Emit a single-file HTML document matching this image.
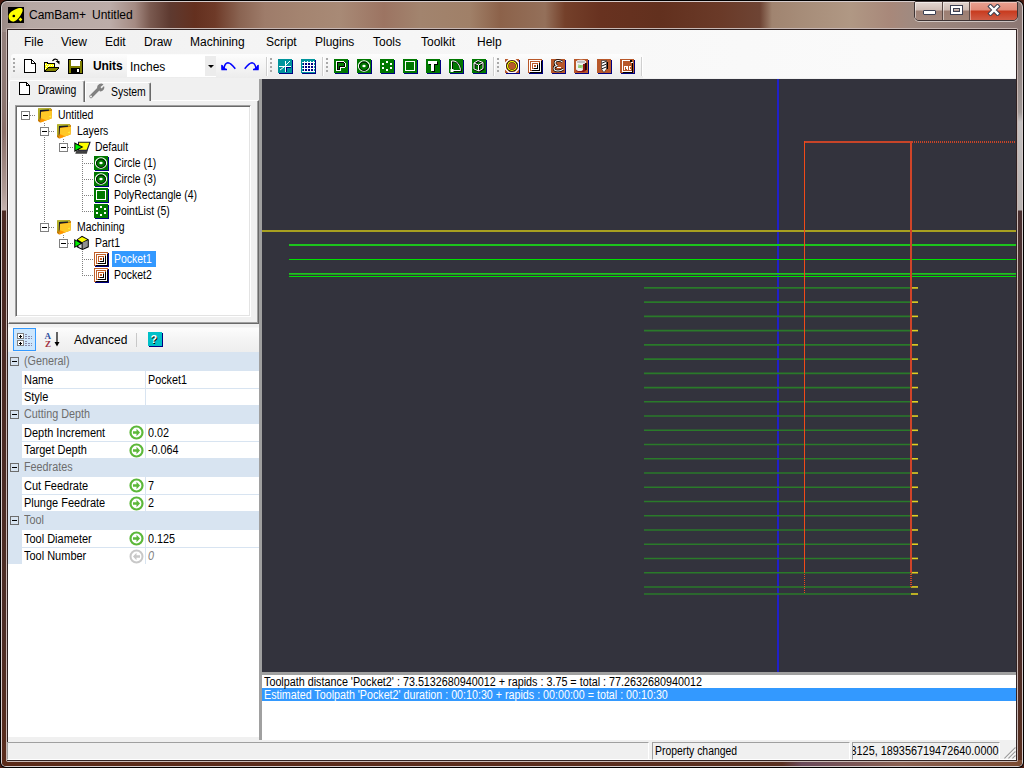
<!DOCTYPE html>
<html><head><meta charset="utf-8">
<style>
*{margin:0;padding:0;box-sizing:border-box}
html,body{width:1024px;height:768px;overflow:hidden;background:#4a1c12}
body{position:relative;font-family:"Liberation Sans",sans-serif;font-size:11px;color:#000}
.a{position:absolute}
.t{position:absolute;white-space:nowrap;line-height:14px;font-size:12px;transform-origin:0 0;transform:scaleX(0.87)}
.m{position:absolute;white-space:nowrap;line-height:14px;font-size:12px}
#frame{left:0;top:0;width:1024px;height:768px;background:#000;border-radius:7px 7px 6px 6px}
#client{left:8px;top:30px;width:1008px;height:730px;background:#f0f0f0}
.grip{position:absolute;top:58px;width:2px;height:14px;background:repeating-linear-gradient(#a8a8a8 0 2px,transparent 2px 4px)}
.ib{position:absolute;top:59px;width:14px;height:14px;box-shadow:1px 1px 0 #000080}
.ib svg{position:absolute;left:0;top:0}
.g{background:#007800}.b{background:#b8582a}
.dv{position:absolute;width:1px;background:repeating-linear-gradient(#808080 0 1px,transparent 1px 2px)}
.dh{position:absolute;height:1px;background:repeating-linear-gradient(90deg,#808080 0 1px,transparent 1px 2px)}
.bx{position:absolute;width:9px;height:9px;border:1px solid #808080;background:#fff}
.bx::after{content:"";position:absolute;left:1px;top:3px;width:5px;height:1px;background:#000}
.ti{position:absolute;width:14px;height:14px;box-shadow:1px 1px 0 #000080}
.ti svg{position:absolute;left:0;top:0}
.p{background:#c0602a}
.tr{position:absolute;white-space:nowrap;line-height:16px;font-size:12px;transform-origin:0 0;transform:scaleX(0.87)}
.mb{position:absolute;left:10px;width:9px;height:9px;border:1px solid #6d6d6d}
.mb::after{content:"";position:absolute;left:1px;top:3px;width:5px;height:1px;background:#000}
.pc{position:absolute;left:24px;white-space:nowrap;line-height:19px;font-size:12px;transform-origin:0 0;transform:scaleX(0.9);color:#6d6d6d}
.pn{position:absolute;left:24px;white-space:nowrap;line-height:17px;font-size:12px;transform-origin:0 0;transform:scaleX(0.915)}
.pv{position:absolute;left:148px;white-space:nowrap;line-height:17px;font-size:12px;transform-origin:0 0;transform:scaleX(0.9)}
.sp{position:absolute;top:742px;height:18px;border-top:1px solid #a0a0a0;border-left:1px solid #a0a0a0;border-right:1px solid #fff;border-bottom:1px solid #fff}
</style></head><body>
<div id="frame" class="a"></div>
<div class="a" style="left:1px;top:1px;width:1022px;height:766px;border-radius:6px 6px 5px 5px;background:#d6cccc"></div>
<div class="a" style="left:2px;top:2px;width:1020px;height:764px;border-radius:5px 5px 4px 4px;overflow:hidden">
 <div class="a" style="left:0;top:0;width:1020px;height:30px;background:linear-gradient(90deg,#988682 -2px,#b6a8a4 26px,#bcaca8 108px,#a48a82 133px,#7a5a50 148px,#5e3a30 168px,#64301f 193px,#6e3a28 213px,#8a6452 238px,#9e7c6a 263px,#a48470 298px,#a88a76 338px,#9c7462 382px,#a2846e 418px,#a08068 468px,#8c624a 498px,#94705a 543px,#74402a 563px,#683220 598px,#62301e 658px,#6a3a28 718px,#6e4434 758px,#a08470 770px,#a68c78 798px,#b09884 848px,#a8887a 888px,#a08a80 910px,#8c7874 1018px)"></div>
 <div class="a" style="left:0;top:30px;width:6px;height:734px;background:linear-gradient(#93807c 0,#8c7670 70px,#8a6e68 100px,#b09c96 160px,#c4b2ae 178px,#4e2c24 179px,#4a2a24 330px,#4e2e26 600px,#5a2c1c 734px)"></div>
 <div class="a" style="left:1014px;top:30px;width:6px;height:734px;background:linear-gradient(#8a7a78 0,#a09896 80px,#c4c0c0 90px,#b8b2b0 178px,#4a3030 179px,#4a3434 330px,#4a2c28 600px,#5a3020 734px)"></div>
 <div class="a" style="left:0;top:758px;width:1020px;height:6px;background:linear-gradient(90deg,#5a2a18,#5a2c1c 500px,#5a3020 780px,#6a4a5a 800px,#8a6050 900px,#7a4a30 1020px)"></div>
</div>
<div class="a" style="left:6px;top:28px;width:1012px;height:734px;background:#c8b8b4;border-radius:2px"></div>
<div class="a" style="left:7px;top:29px;width:1010px;height:732px;background:#302222"></div>
<div id="client" class="a"></div>

<!-- title -->
<svg class="a" style="left:8px;top:7px" width="16" height="16" viewBox="0 0 16 16"><rect width="16" height="16" fill="#000"/><path d="M0.6 10 C0.3 6.5 3.5 3.8 7.5 2.2 C11 0.8 14.5 0.5 14.7 2.8 C14.9 5 12.8 8.2 10.8 10.8 C8.8 13.3 6.8 14.9 4.5 14.6 C2.3 14.3 0.8 12.5 0.6 10Z" fill="#ffff00"/><circle cx="5.8" cy="9" r="1.35" fill="#000"/><path d="M12.5 10.6 l1.9 1.9 -1.9 1.9 -1.9 -1.9z" fill="#ffff00"/></svg>
<div class="m" style="left:29px;top:8px;color:#000">CamBam+</div><div class="m" style="left:92px;top:8px;color:#000">Untitled</div>
<!-- caption buttons -->
<div class="a" style="left:914px;top:1px;width:104px;height:20px;border:1px solid #3e3434;border-radius:2px 2px 5px 5px;overflow:hidden;box-shadow:0 1px 0 rgba(255,255,255,0.55)">
 <div class="a" style="left:0;top:0;width:28px;height:19px;background:linear-gradient(#e4d8d2 0,#d0beb6 8px,#a08276 9px,#a48a80 19px);border-right:1px solid #5a4a46;box-shadow:inset 1px 1px 0 rgba(255,255,255,.5)"></div>
 <div class="a" style="left:28px;top:0;width:27px;height:19px;background:linear-gradient(#e0d4ce 0,#cdbbb3 8px,#9c7e72 9px,#a08679 19px);border-right:1px solid #5a4a46;box-shadow:inset 1px 1px 0 rgba(255,255,255,.5)"></div>
 <div class="a" style="left:55px;top:0;width:47px;height:19px;background:linear-gradient(#e8a090 0,#e08a78 8px,#c83a1e 9px,#d0604a 19px);box-shadow:inset 1px 1px 0 rgba(255,255,255,.4)"></div>
</div>
<div class="a" style="left:923px;top:10px;width:13px;height:5px;background:#fff;border:1px solid #3c4052;border-radius:1px"></div>
<div class="a" style="left:951px;top:6px;width:11px;height:8px;border:2px solid #fff;outline:1px solid #3c4052;box-shadow:inset 0 0 0 1px #3c4052"></div>
<svg class="a" style="left:986px;top:4px" width="16" height="12" viewBox="0 0 16 12"><path d="M4.5 2.5 L11.5 9.5 M11.5 2.5 L4.5 9.5" stroke="#3c4052" stroke-width="4.4" stroke-linecap="square"/><path d="M4.5 2.5 L11.5 9.5 M11.5 2.5 L4.5 9.5" stroke="#fff" stroke-width="2.4" stroke-linecap="square"/></svg>

<!-- menu -->
<div class="a" style="left:8px;top:30px;width:1008px;height:48px;background:linear-gradient(90deg,#f0f0f0 0,#f5f5f5 300px,#f8f8f8 600px,#fbfbfb 1008px)"></div>
<div class="m" style="left:24px;top:35px">File</div>
<div class="m" style="left:61px;top:35px">View</div>
<div class="m" style="left:105px;top:35px">Edit</div>
<div class="m" style="left:144px;top:35px">Draw</div>
<div class="m" style="left:190px;top:35px">Machining</div>
<div class="m" style="left:266px;top:35px">Script</div>
<div class="m" style="left:315px;top:35px">Plugins</div>
<div class="m" style="left:373px;top:35px">Tools</div>
<div class="m" style="left:421px;top:35px">Toolkit</div>
<div class="m" style="left:477px;top:35px">Help</div>

<!-- toolbar -->
<div class="a" style="left:11px;top:54px;width:632px;height:24px;border-radius:3px 3px 0 0;background:linear-gradient(#fdfdfd,#f3f3f3 60%,#ececec)"></div>
<div class="a" style="left:266px;top:57px;width:1px;height:19px;background:#cfcfcf;box-shadow:1px 0 0 #fff"></div>
<div class="a" style="left:322px;top:57px;width:1px;height:19px;background:#cfcfcf;box-shadow:1px 0 0 #fff"></div>
<div class="a" style="left:493px;top:57px;width:1px;height:19px;background:#cfcfcf;box-shadow:1px 0 0 #fff"></div>
<div class="a" style="left:641px;top:57px;width:1px;height:19px;background:#cfcfcf;box-shadow:1px 0 0 #fff"></div>
<div class="grip" style="left:13px"></div><div class="grip" style="left:270px"></div><div class="grip" style="left:326px"></div><div class="grip" style="left:497px"></div>
<!-- new -->
<svg class="a" style="left:24px;top:59px" width="12" height="14" viewBox="0 0 12 14" shape-rendering="crispEdges"><path d="M0.5 0.5 H7.5 L11.5 4.5 V13.5 H0.5Z" fill="#fff" stroke="#000"/><path d="M7.5 0.5 V4.5 H11.5" fill="none" stroke="#000"/></svg>
<!-- open -->
<svg class="a" style="left:44px;top:58px" width="17" height="15" viewBox="0 0 17 15" shape-rendering="crispEdges"><path d="M0 4 H4 V5 H11 V9 H15 V10 L12 14 H0Z" fill="#000"/><path d="M1 5 H3 V6 H10 V9 H4 L1 13Z" fill="#ffff00"/><path d="M1 6 h1 v1 h-1z M2 8 h1 v1 h-1z M1 10 h1 v1 h-1z M3 6 h1 v1 h-1z M5 7 h1 v1 h-1z M7 7 h1 v1 h-1z M9 7 h1 v1 h-1z M4 8 h1 v1 h-1z" fill="#fff"/><path d="M4 10 H14 L11 13 H2Z" fill="#808000"/><path d="M8.5 3 Q11 -0.5 14 2.5" fill="none" stroke="#000" stroke-width="1.2" shape-rendering="auto"/><path d="M11.5 3 H15.5 V6.5Z" fill="#000" shape-rendering="auto"/></svg>
<!-- save -->
<svg class="a" style="left:68px;top:59px" width="15" height="15" viewBox="0 0 15 15" shape-rendering="crispEdges"><rect x="0" y="0" width="15" height="15" fill="#000"/><rect x="1" y="1" width="2" height="13" fill="#808000"/><rect x="12" y="2" width="2" height="12" fill="#808000"/><rect x="1" y="7" width="13" height="2" fill="#808000"/><rect x="3" y="1" width="9" height="6" fill="#fff"/><rect x="3" y="9" width="9" height="5" fill="#000"/><rect x="9" y="10" width="2" height="3" fill="#fff"/><rect x="12" y="1" width="1" height="1" fill="#fff"/></svg>
<div class="m" style="left:93px;top:59px;font-weight:bold;font-size:12px;letter-spacing:-0.1px;color:#000">Units</div>
<!-- combo -->
<div class="a" style="left:127px;top:55px;width:89px;height:22px;background:#fff"></div>
<div class="a" style="left:205px;top:56px;width:11px;height:20px;background:#ececec"></div>
<div class="a" style="left:208px;top:65px;width:0;height:0;border-left:3px solid transparent;border-right:3px solid transparent;border-top:3px solid #000"></div>
<div class="m" style="left:130px;top:60px;font-size:12px;color:#000">Inches</div>
<!-- undo redo -->
<svg class="a" style="left:221px;top:61px" width="16" height="10" viewBox="0 0 16 10"><path d="M3 7 Q4 2 7 1.8 Q9.5 1.8 14.3 7.8" fill="none" stroke="#0000ff" stroke-width="1.5"/><path d="M0.5 3.5 V8.5 H5.5Z" fill="#0000ff"/><path d="M1 4 V8.5 H6" fill="none" stroke="#0000ff" stroke-width="1.3"/></svg>
<svg class="a" style="left:244px;top:61px" width="16" height="10" viewBox="0 0 16 10"><g transform="translate(15,0) scale(-1,1)"><path d="M3 7 Q4 2 7 1.8 Q9.5 1.8 14.3 7.8" fill="none" stroke="#0000ff" stroke-width="1.5"/><path d="M0.5 3.5 V8.5 H5.5Z" fill="#0000ff"/><path d="M1 4 V8.5 H6" fill="none" stroke="#0000ff" stroke-width="1.3"/></g></svg>
<!-- snap / grid -->
<div class="ib" style="left:278px;background:#00949c"><svg width="14" height="14" viewBox="0 0 14 14" shape-rendering="crispEdges"><path d="M7 2 V13 M1 7 H13" stroke="#fff" stroke-width="1"/><path d="M8 8 H13 M8 8 V13" stroke="#000080"/><path d="M2 11 L6 8 M12 2 L8 6" stroke="#fff" stroke-width="1" shape-rendering="auto"/></svg></div>
<div class="ib" style="left:301px;background:#00949c"><svg width="14" height="14" viewBox="0 0 14 14" shape-rendering="crispEdges"><rect x="2" y="3" width="10" height="9" fill="#000080"/><path d="M3.5 2 V13 M6.5 2 V13 M9.5 2 V13 M12.5 2 V13 M1 3.5 H14 M1 6.5 H14 M1 9.5 H14 M1 12.5 H14" stroke="#fff"/></svg></div>
<!-- green -->
<div class="ib g" style="left:334px"><svg width="14" height="14" viewBox="0 0 14 14" shape-rendering="crispEdges"><path d="M2 2 H10 V3 H11 V4 H12 V8 H11 V9 H7 V12 H2Z" fill="#fff"/><path d="M3 3 H10 V4 H11 V8 H6 V11 H3Z" fill="#000"/><path d="M4 4 H9.5 V5 H10 V7 H5 V10 H4Z" fill="#007800"/></svg></div>
<div class="ib g" style="left:357px"><svg width="14" height="14" viewBox="0 0 14 14"><ellipse cx="7" cy="7" rx="5.6" ry="5.2" fill="none" stroke="#fff" stroke-width="1.1"/><ellipse cx="7" cy="7.3" rx="4.5" ry="4.2" fill="none" stroke="#000" stroke-width="0.9"/><ellipse cx="7" cy="7" rx="1.7" ry="1.2" fill="#fff"/></svg></div>
<div class="ib g" style="left:380px"><svg width="14" height="14" viewBox="0 0 14 14" shape-rendering="crispEdges"><g fill="#fff"><rect x="6" y="2" width="2" height="2"/><rect x="2" y="4" width="2" height="2"/><rect x="10" y="4" width="2" height="2"/><rect x="2" y="8" width="2" height="2"/><rect x="10" y="8" width="2" height="2"/><rect x="6" y="10" width="2" height="2"/></g></svg></div>
<div class="ib g" style="left:403px"><svg width="14" height="14" viewBox="0 0 14 14" shape-rendering="crispEdges"><rect x="2" y="2" width="10" height="10" fill="#000"/><rect x="2" y="2" width="9" height="9" fill="none" stroke="#fff" stroke-width="1"/><rect x="3" y="3" width="8" height="8" fill="#007800"/></svg></div>
<div class="ib g" style="left:426px"><svg width="14" height="14" viewBox="0 0 14 14" shape-rendering="crispEdges"><rect x="3" y="3" width="9" height="3" fill="#000"/><rect x="6" y="5" width="3" height="8" fill="#000"/><rect x="2" y="2" width="9" height="3" fill="#fff"/><rect x="5" y="4" width="3" height="8" fill="#fff"/></svg></div>
<div class="ib g" style="left:449px"><svg width="14" height="14" viewBox="0 0 14 14"><path d="M3 12 V2.5 H5.5 Q10.5 3.5 12 11 V12Z" fill="none" stroke="#000" stroke-width="1.6"/><path d="M2.5 11.5 V2 H5 Q10 3 11.5 10.5 V11.5Z" fill="none" stroke="#fff" stroke-width="1"/><rect x="1.5" y="10" width="3" height="3" fill="#fff"/></svg></div>
<div class="ib g" style="left:472px"><svg width="14" height="14" viewBox="0 0 14 14"><path d="M2.5 4.5 L6.5 2 L11.5 4 V10 L7.5 12.5 L2.5 10.5Z M2.5 4.5 L7 6.5 L11.5 4 M7 6.5 V12.5" fill="none" stroke="#000" stroke-width="1.8"/><path d="M2 4 L6 1.5 L11 3.5 V9.5 L7 12 L2 10Z M2 4 L6.5 6 L11 3.5 M6.5 6 V12" fill="none" stroke="#fff" stroke-width="1"/></svg></div>
<!-- brown -->
<div class="ib b" style="left:505px"><svg width="14" height="14" viewBox="0 0 14 14"><path d="M4 0.5 H10 L13.5 4 V10 L10 13.5 H4 L0.5 10 V4Z" fill="none" stroke="#fff" stroke-width="1.4"/><circle cx="7" cy="7" r="5.8" fill="#000"/><circle cx="7" cy="7" r="4.4" fill="none" stroke="#ffff00" stroke-width="1.3"/><circle cx="7" cy="7" r="3.6" fill="#b8582a"/></svg></div>
<div class="ib b" style="left:528px"><svg width="14" height="14" viewBox="0 0 14 14" shape-rendering="crispEdges"><path d="M1.5 1.5 H12.5 V12.5 H1.5Z M3.5 3.5 H10.5 V10.5 H3.5Z M5.5 5.5 H8.5 V8.5 H5.5Z" fill="none" stroke="#fff"/><path d="M13 2 V13 H2 M11 4 V11 H4 M9 6 V9 H6" fill="none" stroke="#000"/></svg></div>
<div class="ib b" style="left:551px"><svg width="14" height="14" viewBox="0 0 14 14"><path d="M11.5 3 Q10 1.5 7 1.5 Q4 1.5 4 4 Q4 6 6.5 6.8 Q3 7 3 9.5 Q3 12 7 12 Q10 12 12.5 10" fill="none" stroke="#000" stroke-width="2.4"/><path d="M11.5 3 Q10 1.5 7 1.5 Q4 1.5 4 4 Q4 6 6.5 6.8 Q3 7 3 9.5 Q3 12 7 12 Q10 12 12.5 10 M6 8.5 H10" fill="none" stroke="#fff" stroke-width="1.1"/></svg></div>
<div class="ib b" style="left:574px"><svg width="14" height="14" viewBox="0 0 14 14"><path d="M2 3 V11 Q2 13 7 13 Q12 13 12 11 V3Z" fill="#8a1010"/><path d="M2 3 V10 Q2 12 6 12 Q9 12 9 10 V4" fill="#f0f0f0"/><ellipse cx="7" cy="3" rx="5" ry="1.8" fill="#c0c0c0" stroke="#fff" stroke-width="0.8"/><path d="M4 6 L9 7 L4 8 L9 9" stroke="#70c040" stroke-width="0.8" fill="none"/><path d="M12 4 V11" stroke="#000" stroke-width="1.5"/></svg></div>
<div class="ib b" style="left:597px"><svg width="14" height="14" viewBox="0 0 14 14"><path d="M4.5 1.5 H9.5 V10 L7 13.5 L4.5 10Z" fill="#fff" stroke="#000" stroke-width="0.5"/><path d="M4.8 4.2 L9.2 2.4 M4.8 7 L9.2 5.2 M4.8 9.8 L9.2 8" stroke="#000" stroke-width="0.9"/><path d="M10.5 3 V10" stroke="#000" stroke-width="1"/></svg></div>
<div class="ib b" style="left:620px"><svg width="14" height="14" viewBox="0 0 14 14" shape-rendering="crispEdges"><path d="M2 1 H10 L13 4 V13 H2Z" fill="#fff"/><path d="M3 2 H9.5 L12 4.5 V12 H3Z" fill="#b8582a"/><path d="M13 4 V14 H3 V13 H12 V4Z" fill="#000"/><rect x="10" y="1" width="2" height="2" fill="#000"/><path d="M4 7 H8 V11 H7 V8 H6.5 V10 H5.5 V8 H5 V11 H4Z" fill="#fff"/><path d="M9 7 H11 V8 H10 V10 H11 V11 H9Z" fill="#fff"/></svg></div>

<!-- canvas -->
<div class="a" style="left:262px;top:79px;width:754px;height:593px;background:#33333d"></div>
<div class="a" style="left:259px;top:79px;width:3px;height:661px;background:#a0a0a0"></div>
<svg class="a" style="left:262px;top:79px" width="754" height="593" viewBox="0 0 754 593"><rect x="515" y="0" width="2" height="593" fill="#2020c8"/><rect x="0" y="151" width="754" height="2" fill="#a8a020"/><rect x="27" y="165" width="727" height="2" fill="#1cc41c"/><rect x="27" y="180" width="727" height="1" fill="#00e000"/><rect x="27" y="194" width="727" height="1" fill="#1cc41c"/><rect x="27" y="195" width="727" height="1" fill="#2a9a2a"/><rect x="27" y="197" width="727" height="1" fill="#00e000"/><line x1="382" y1="208.9" x2="649" y2="208.9" stroke="#2a7a2a" stroke-width="1.6"/><line x1="649" y1="208.9" x2="656" y2="208.9" stroke="#e0d020" stroke-width="1.6"/><line x1="382" y1="223.14" x2="649" y2="223.14" stroke="#2a7a2a" stroke-width="1.6"/><line x1="649" y1="223.14" x2="656" y2="223.14" stroke="#e0d020" stroke-width="1.6"/><line x1="382" y1="237.38" x2="649" y2="237.38" stroke="#2a7a2a" stroke-width="1.6"/><line x1="649" y1="237.38" x2="656" y2="237.38" stroke="#e0d020" stroke-width="1.6"/><line x1="382" y1="251.62" x2="649" y2="251.62" stroke="#2a7a2a" stroke-width="1.6"/><line x1="649" y1="251.62" x2="656" y2="251.62" stroke="#e0d020" stroke-width="1.6"/><line x1="382" y1="265.86" x2="649" y2="265.86" stroke="#2a7a2a" stroke-width="1.6"/><line x1="649" y1="265.86" x2="656" y2="265.86" stroke="#e0d020" stroke-width="1.6"/><line x1="382" y1="280.1" x2="649" y2="280.1" stroke="#2a7a2a" stroke-width="1.6"/><line x1="649" y1="280.1" x2="656" y2="280.1" stroke="#e0d020" stroke-width="1.6"/><line x1="382" y1="294.34" x2="649" y2="294.34" stroke="#2a7a2a" stroke-width="1.6"/><line x1="649" y1="294.34" x2="656" y2="294.34" stroke="#e0d020" stroke-width="1.6"/><line x1="382" y1="308.58" x2="649" y2="308.58" stroke="#2a7a2a" stroke-width="1.6"/><line x1="649" y1="308.58" x2="656" y2="308.58" stroke="#e0d020" stroke-width="1.6"/><line x1="382" y1="322.82" x2="649" y2="322.82" stroke="#2a7a2a" stroke-width="1.6"/><line x1="649" y1="322.82" x2="656" y2="322.82" stroke="#e0d020" stroke-width="1.6"/><line x1="382" y1="337.06" x2="649" y2="337.06" stroke="#2a7a2a" stroke-width="1.6"/><line x1="649" y1="337.06" x2="656" y2="337.06" stroke="#e0d020" stroke-width="1.6"/><line x1="382" y1="351.3" x2="649" y2="351.3" stroke="#2a7a2a" stroke-width="1.6"/><line x1="649" y1="351.3" x2="656" y2="351.3" stroke="#e0d020" stroke-width="1.6"/><line x1="382" y1="365.54" x2="649" y2="365.54" stroke="#2a7a2a" stroke-width="1.6"/><line x1="649" y1="365.54" x2="656" y2="365.54" stroke="#e0d020" stroke-width="1.6"/><line x1="382" y1="379.78" x2="649" y2="379.78" stroke="#2a7a2a" stroke-width="1.6"/><line x1="649" y1="379.78" x2="656" y2="379.78" stroke="#e0d020" stroke-width="1.6"/><line x1="382" y1="394.02" x2="649" y2="394.02" stroke="#2a7a2a" stroke-width="1.6"/><line x1="649" y1="394.02" x2="656" y2="394.02" stroke="#e0d020" stroke-width="1.6"/><line x1="382" y1="408.26" x2="649" y2="408.26" stroke="#2a7a2a" stroke-width="1.6"/><line x1="649" y1="408.26" x2="656" y2="408.26" stroke="#e0d020" stroke-width="1.6"/><line x1="382" y1="422.5" x2="649" y2="422.5" stroke="#2a7a2a" stroke-width="1.6"/><line x1="649" y1="422.5" x2="656" y2="422.5" stroke="#e0d020" stroke-width="1.6"/><line x1="382" y1="436.74" x2="649" y2="436.74" stroke="#2a7a2a" stroke-width="1.6"/><line x1="649" y1="436.74" x2="656" y2="436.74" stroke="#e0d020" stroke-width="1.6"/><line x1="382" y1="450.98" x2="649" y2="450.98" stroke="#2a7a2a" stroke-width="1.6"/><line x1="649" y1="450.98" x2="656" y2="450.98" stroke="#e0d020" stroke-width="1.6"/><line x1="382" y1="465.22" x2="649" y2="465.22" stroke="#2a7a2a" stroke-width="1.6"/><line x1="649" y1="465.22" x2="656" y2="465.22" stroke="#e0d020" stroke-width="1.6"/><line x1="382" y1="479.46" x2="649" y2="479.46" stroke="#2a7a2a" stroke-width="1.6"/><line x1="649" y1="479.46" x2="656" y2="479.46" stroke="#e0d020" stroke-width="1.6"/><line x1="382" y1="493.7" x2="649" y2="493.7" stroke="#2a7a2a" stroke-width="1.6"/><line x1="649" y1="493.7" x2="656" y2="493.7" stroke="#e0d020" stroke-width="1.6"/><line x1="382" y1="507.94" x2="649" y2="507.94" stroke="#2a7a2a" stroke-width="1.6"/><line x1="649" y1="507.94" x2="656" y2="507.94" stroke="#e0d020" stroke-width="1.6"/><line x1="382" y1="515" x2="649" y2="515" stroke="#2a7a2a" stroke-width="1.6"/><line x1="649" y1="515" x2="656" y2="515" stroke="#e0d020" stroke-width="1.6"/><rect x="542" y="62" width="106" height="2" fill="#c84428"/><line x1="650" y1="63" x2="754" y2="63" stroke="#c84428" stroke-width="2" stroke-dasharray="1 1"/><rect x="542" y="62" width="1" height="431" fill="#f04a18"/><line x1="542.5" y1="493" x2="542.5" y2="514" stroke="#f04a18" stroke-width="1" stroke-dasharray="1 1"/><rect x="648" y="62" width="2" height="431" fill="#d04428"/><line x1="649" y1="493" x2="649" y2="508" stroke="#d04428" stroke-width="2" stroke-dasharray="1 1"/></svg>

<div class="a" style="left:262px;top:672px;width:754px;height:3px;background:#a0a0a0"></div>
<!-- output -->
<div class="a" style="left:262px;top:675px;width:754px;height:65px;background:#fff"></div>
<div class="a" style="left:262px;top:688px;width:754px;height:13px;background:#3399ff"></div>
<div class="t" style="left:264px;top:675px;transform:scaleX(0.898)">Toolpath distance 'Pocket2' : 73.5132680940012 + rapids : 3.75 = total : 77.2632680940012</div>
<div class="t" style="left:264px;top:688px;color:#fff;transform:scaleX(0.892)">Estimated Toolpath 'Pocket2' duration : 00:10:30 + rapids : 00:00:00 = total : 00:10:30</div>

<!-- left panel -->
<!-- tabs -->
<div class="a" style="left:8px;top:100px;width:251px;height:224px;background:#f0f0f0;border-left:1px solid #fff;border-top:1px solid #fff;border-right:1px solid #696969;border-bottom:1px solid #696969;box-shadow:inset -1px -1px 0 #a0a0a0"></div>
<div class="a" style="left:85px;top:82px;width:66px;height:19px;background:#f0f0f0;border-left:1px solid #fff;border-top:1px solid #fff;border-right:1px solid #696969;box-shadow:inset -1px 0 0 #a0a0a0;border-radius:2px 2px 0 0"></div>
<div class="a" style="left:9px;top:80px;width:76px;height:22px;background:#f0f0f0;border-left:1px solid #fff;border-top:1px solid #fff;border-right:1px solid #696969;box-shadow:inset -1px 0 0 #a0a0a0;border-radius:2px 2px 0 0"></div>
<svg class="a" style="left:19px;top:82px" width="12" height="13" viewBox="0 0 12 13" shape-rendering="crispEdges"><path d="M0.5 0.5 H7.5 L10.5 3.5 V12.5 H0.5Z" fill="#fff" stroke="#000"/><path d="M7.5 0.5 V3.5 H10.5" fill="none" stroke="#000"/></svg>
<div class="t" style="left:38px;top:83px">Drawing</div>
<svg class="a" style="left:88px;top:83px" width="18" height="16" viewBox="0 0 18 16"><path d="M3 13.5 L10 6.5" stroke="#808080" stroke-width="3.2" stroke-linecap="round"/><path d="M9 4.5 A4 4 0 0 1 15.5 1.5 L12.5 4 L13.5 5.5 L16 3 A4 4 0 0 1 12 8.5Z" fill="#808080"/><circle cx="3" cy="13.5" r="1" fill="#f0f0f0"/></svg>
<div class="t" style="left:111px;top:85px">System</div>
<!-- tree -->
<div class="a" style="left:15px;top:105px;width:236px;height:212px;background:#fff;border-left:1px solid #a0a0a0;border-top:1px solid #a0a0a0;border-right:1px solid #fff;border-bottom:1px solid #fff;box-shadow:inset 1px 1px 0 #696969,inset -1px -1px 0 #e3e3e3"></div>
<div id="tree">
 <div class="dv" style="left:44px;top:123px;height:104px"></div>
 <div class="dv" style="left:63px;top:139px;height:8px"></div>
 <div class="dv" style="left:63px;top:235px;height:8px"></div>
 <div class="dv" style="left:82px;top:155px;height:56px"></div>
 <div class="dv" style="left:82px;top:251px;height:24px"></div>
 <div class="dh" style="left:30px;top:115px;width:6px"></div>
 <div class="dh" style="left:49px;top:131px;width:6px"></div>
 <div class="dh" style="left:68px;top:147px;width:6px"></div>
 <div class="dh" style="left:82px;top:163px;width:12px"></div>
 <div class="dh" style="left:82px;top:179px;width:12px"></div>
 <div class="dh" style="left:82px;top:195px;width:12px"></div>
 <div class="dh" style="left:82px;top:211px;width:12px"></div>
 <div class="dh" style="left:49px;top:227px;width:6px"></div>
 <div class="dh" style="left:68px;top:243px;width:6px"></div>
 <div class="dh" style="left:82px;top:259px;width:12px"></div>
 <div class="dh" style="left:82px;top:275px;width:12px"></div>
 <div class="bx" style="left:21px;top:111px"></div>
 <div class="bx" style="left:40px;top:127px"></div>
 <div class="bx" style="left:59px;top:143px"></div>
 <div class="bx" style="left:40px;top:223px"></div>
 <div class="bx" style="left:59px;top:239px"></div>
 <svg class="a fold" style="left:36px;top:107px" width="16" height="16" viewBox="0 0 16 16"><path d="M2 1.5 L14.5 1 L16 2.5 L15.5 11.5 L4 15.5 L2 14Z" fill="#c87800"/><path d="M2.2 1.2 L14.5 1.2 L15 3 L4 4.5 L3.5 13 L2.2 12Z" fill="#b0b830"/><path d="M4 3 L13 2.6 L13 3.8 L5 4.8 L4.6 13 L3.8 12Z" fill="#181828"/><path d="M5 5 L16 3.8 L15.6 11.6 L4.6 15.4Z" fill="#ffc828"/><path d="M4.6 11 L10 13.2 L4.6 15.4Z" fill="#ff9400"/><path d="M13 9.5 L14.8 8.4 L14.5 10.4Z" fill="#ffff40"/></svg>
 <svg class="a fold" style="left:55px;top:123px" width="16" height="16" viewBox="0 0 16 16"><path d="M2 1.5 L14.5 1 L16 2.5 L15.5 11.5 L4 15.5 L2 14Z" fill="#c87800"/><path d="M2.2 1.2 L14.5 1.2 L15 3 L4 4.5 L3.5 13 L2.2 12Z" fill="#b0b830"/><path d="M4 3 L13 2.6 L13 3.8 L5 4.8 L4.6 13 L3.8 12Z" fill="#181828"/><path d="M5 5 L16 3.8 L15.6 11.6 L4.6 15.4Z" fill="#ffc828"/><path d="M4.6 11 L10 13.2 L4.6 15.4Z" fill="#ff9400"/><path d="M13 9.5 L14.8 8.4 L14.5 10.4Z" fill="#ffff40"/></svg>
 <svg class="a fold" style="left:55px;top:219px" width="16" height="16" viewBox="0 0 16 16"><path d="M2 1.5 L14.5 1 L16 2.5 L15.5 11.5 L4 15.5 L2 14Z" fill="#c87800"/><path d="M2.2 1.2 L14.5 1.2 L15 3 L4 4.5 L3.5 13 L2.2 12Z" fill="#b0b830"/><path d="M4 3 L13 2.6 L13 3.8 L5 4.8 L4.6 13 L3.8 12Z" fill="#181828"/><path d="M5 5 L16 3.8 L15.6 11.6 L4.6 15.4Z" fill="#ffc828"/><path d="M4.6 11 L10 13.2 L4.6 15.4Z" fill="#ff9400"/><path d="M13 9.5 L14.8 8.4 L14.5 10.4Z" fill="#ffff40"/></svg>
 <svg class="a" style="left:74px;top:141px" width="17" height="14" viewBox="0 0 17 14"><path d="M2.5 9.3 H13.8 L12.8 12.8 H1.2Z" fill="#404040"/><path d="M4 0.8 H16.8 L13.5 9.8 H4Z" fill="#1a1a30"/><path d="M5 1.8 H15.2 L12.6 8.8 H5Z" fill="#ffff00"/><path d="M0.3 1.3 L9.4 6 L0.3 11Z" fill="#000"/><path d="M1.4 2.9 L7.4 6 L1.4 9.3Z" fill="#00f000"/></svg>
 <svg class="a" style="left:74px;top:235px" width="17" height="17" viewBox="0 0 17 17"><path d="M2.8 4.6 L8 0.8 L14.8 4.6 V12.2 L8.5 15 L2.8 12.2Z" fill="#000"/><path d="M8.6 7.6 L13.8 5.2 V11.6 L8.6 13.9Z" fill="#909090"/><path d="M4 9 L7.6 8.4 V13.6 L4.6 12Z" fill="#d8d8d8"/><path d="M3.8 4.6 L8 2 L13.2 4.6 L8 7.2Z" fill="#ffff00"/><path d="M0.2 3.9 L8.4 8.5 L0.2 13.1Z" fill="#000"/><path d="M1.3 5.6 L6.6 8.5 L1.3 11.4Z" fill="#00f000"/></svg>
 <div class="ti g" style="left:94px;top:156px"><svg width="14" height="14" viewBox="0 0 14 14"><ellipse cx="7" cy="7" rx="5.6" ry="5.2" fill="none" stroke="#fff" stroke-width="1.1"/><ellipse cx="7" cy="7.3" rx="4.5" ry="4.2" fill="none" stroke="#000" stroke-width="0.9"/><ellipse cx="7" cy="7" rx="1.7" ry="1.2" fill="#fff"/></svg></div>
 <div class="ti g" style="left:94px;top:172px"><svg width="14" height="14" viewBox="0 0 14 14"><ellipse cx="7" cy="7" rx="5.6" ry="5.2" fill="none" stroke="#fff" stroke-width="1.1"/><ellipse cx="7" cy="7.3" rx="4.5" ry="4.2" fill="none" stroke="#000" stroke-width="0.9"/><ellipse cx="7" cy="7" rx="1.7" ry="1.2" fill="#fff"/></svg></div>
 <div class="ti g" style="left:94px;top:188px"><svg width="14" height="14" viewBox="0 0 14 14" shape-rendering="crispEdges"><rect x="2" y="2" width="10" height="10" fill="#000"/><rect x="2" y="2" width="9" height="9" fill="none" stroke="#fff" stroke-width="1"/><rect x="3" y="3" width="8" height="8" fill="#007800"/></svg></div>
 <div class="ti g" style="left:94px;top:204px"><svg width="14" height="14" viewBox="0 0 14 14" shape-rendering="crispEdges"><g fill="#fff"><rect x="6" y="2" width="2" height="2"/><rect x="2" y="4" width="2" height="2"/><rect x="10" y="4" width="2" height="2"/><rect x="2" y="8" width="2" height="2"/><rect x="10" y="8" width="2" height="2"/><rect x="6" y="10" width="2" height="2"/></g></svg></div>
 <div class="ti p" style="left:94px;top:252px"><svg width="14" height="14" viewBox="0 0 14 14" shape-rendering="crispEdges"><path d="M1.5 1.5 H12.5 V12.5 H1.5Z M3.5 3.5 H10.5 V10.5 H3.5Z M5.5 5.5 H8.5 V8.5 H5.5Z" fill="none" stroke="#fff"/><path d="M13 2 V13 H2 M11 4 V11 H4 M9 6 V9 H6" fill="none" stroke="#000"/></svg></div>
 <div class="ti p" style="left:94px;top:268px"><svg width="14" height="14" viewBox="0 0 14 14" shape-rendering="crispEdges"><path d="M1.5 1.5 H12.5 V12.5 H1.5Z M3.5 3.5 H10.5 V10.5 H3.5Z M5.5 5.5 H8.5 V8.5 H5.5Z" fill="none" stroke="#fff"/><path d="M13 2 V13 H2 M11 4 V11 H4 M9 6 V9 H6" fill="none" stroke="#000"/></svg></div>
 <div class="a" style="left:112px;top:251px;width:44px;height:16px;background:#3399ff"></div>
 <div class="tr" style="left:58px;top:107px">Untitled</div>
 <div class="tr" style="left:77px;top:123px">Layers</div>
 <div class="tr" style="left:95px;top:139px">Default</div>
 <div class="tr" style="left:114px;top:155px">Circle (1)</div>
 <div class="tr" style="left:114px;top:171px">Circle (3)</div>
 <div class="tr" style="left:114px;top:187px">PolyRectangle (4)</div>
 <div class="tr" style="left:114px;top:203px">PointList (5)</div>
 <div class="tr" style="left:77px;top:219px">Machining</div>
 <div class="tr" style="left:95px;top:235px">Part1</div>
 <div class="tr" style="left:114px;top:251px;color:#fff">Pocket1</div>
 <div class="tr" style="left:114px;top:267px">Pocket2</div>
</div>

<!-- property toolbar -->
<div class="a" style="left:8px;top:324px;width:251px;height:28px;background:linear-gradient(#f0f0f0 0,#f0f0f0 3px,#fcfcfc 4px,#f5f5f5 50%,#eeeeee)"></div>
<div class="a" style="left:8px;top:352px;width:251px;height:212px;background:#d8e4f1"></div>
<div class="a" style="left:8px;top:564px;width:251px;height:173px;background:#fff"></div>
<div class="a" style="left:8px;top:737px;width:251px;height:5px;background:#f0f0f0"></div>
<!-- prop toolbar buttons -->
<div class="a" style="left:13px;top:328px;width:23px;height:23px;background:#cde6fc;border:1px solid #3399ff"></div>
<svg class="a" style="left:16px;top:331px" width="17" height="17" viewBox="0 0 17 17" shape-rendering="crispEdges"><rect x="1.5" y="2.5" width="6" height="5" fill="#fff" stroke="#808080"/><rect x="1.5" y="9.5" width="6" height="5" fill="#fff" stroke="#808080"/><path d="M3 5 H6 M4.5 3.5 V6.5 M3 12 H6 M4.5 10.5 V13.5" stroke="#000"/><path d="M9 3 H12 M9 5 H16 M9 7 H16 M9 10 H12 M9 12 H16 M9 14 H16" stroke="#8888a8" stroke-dasharray="2 1"/></svg>
<svg class="a" style="left:44px;top:331px" width="18" height="17" viewBox="0 0 18 17"><text x="0.5" y="7.5" font-family="Liberation Serif" font-size="9" font-weight="bold" fill="#3050a0">A</text><text x="1" y="15.5" font-family="Liberation Serif" font-size="9" font-weight="bold" fill="#a03040">Z</text><path d="M13 1 V14" stroke="#000" stroke-width="1.2"/><path d="M10.5 11 L13 15.5 L15.5 11Z" fill="#000"/></svg>
<div class="m" style="left:74px;top:333px;font-size:12px;color:#000">Advanced</div>
<div class="a" style="left:136px;top:333px;width:1px;height:14px;background:#c8c8c8"></div>
<div class="a" style="left:148px;top:332px;width:14px;height:14px;background:#00c0c8;box-shadow:1px 1px 0 #000080"><svg width="14" height="14" viewBox="0 0 14 14"><text x="3.2" y="11.5" font-family="Liberation Sans" font-size="11" font-weight="bold" fill="#000">?</text><text x="2.5" y="11" font-family="Liberation Sans" font-size="11" font-weight="bold" fill="#fff">?</text></svg></div>
<div class="mb" style="top:357px"></div><div class="pc" style="top:352px">(General)</div>
<div class="a" style="left:22px;top:371px;width:123px;height:17px;background:#fff"></div><div class="a" style="left:146px;top:371px;width:113px;height:17px;background:#fff"></div>
<div class="pn" style="top:372px">Name</div>
<div class="pv" style="top:372px;">Pocket1</div>
<div class="a" style="left:22px;top:389px;width:123px;height:16px;background:#fff"></div><div class="a" style="left:146px;top:389px;width:113px;height:16px;background:#fff"></div>
<div class="pn" style="top:389px">Style</div>
<div class="mb" style="top:410px"></div><div class="pc" style="top:405px">Cutting Depth</div>
<div class="a" style="left:22px;top:424px;width:123px;height:17px;background:#fff"></div><div class="a" style="left:146px;top:424px;width:113px;height:17px;background:#fff"></div>
<div class="pn" style="top:425px">Depth Increment</div>
<div class="pv" style="top:425px;">0.02</div>
<div class="a" style="left:129px;top:425px;width:15px;height:15px"><svg width="15" height="15" viewBox="0 0 15 15"><circle cx="7.5" cy="7.5" r="6" fill="#fff" stroke="#5cb83a" stroke-width="2.2"/><path d="M4 6.3 H7.5 V3.8 L11 7.5 L7.5 11.2 V8.7 H4Z" fill="#5cb83a"/></svg></div>
<div class="a" style="left:22px;top:442px;width:123px;height:16px;background:#fff"></div><div class="a" style="left:146px;top:442px;width:113px;height:16px;background:#fff"></div>
<div class="pn" style="top:442px">Target Depth</div>
<div class="pv" style="top:442px;">-0.064</div>
<div class="a" style="left:129px;top:443px;width:15px;height:15px"><svg width="15" height="15" viewBox="0 0 15 15"><circle cx="7.5" cy="7.5" r="6" fill="#fff" stroke="#5cb83a" stroke-width="2.2"/><path d="M4 6.3 H7.5 V3.8 L11 7.5 L7.5 11.2 V8.7 H4Z" fill="#5cb83a"/></svg></div>
<div class="mb" style="top:463px"></div><div class="pc" style="top:458px">Feedrates</div>
<div class="a" style="left:22px;top:477px;width:123px;height:17px;background:#fff"></div><div class="a" style="left:146px;top:477px;width:113px;height:17px;background:#fff"></div>
<div class="pn" style="top:478px">Cut Feedrate</div>
<div class="pv" style="top:478px;">7</div>
<div class="a" style="left:129px;top:478px;width:15px;height:15px"><svg width="15" height="15" viewBox="0 0 15 15"><circle cx="7.5" cy="7.5" r="6" fill="#fff" stroke="#5cb83a" stroke-width="2.2"/><path d="M4 6.3 H7.5 V3.8 L11 7.5 L7.5 11.2 V8.7 H4Z" fill="#5cb83a"/></svg></div>
<div class="a" style="left:22px;top:495px;width:123px;height:16px;background:#fff"></div><div class="a" style="left:146px;top:495px;width:113px;height:16px;background:#fff"></div>
<div class="pn" style="top:495px">Plunge Feedrate</div>
<div class="pv" style="top:495px;">2</div>
<div class="a" style="left:129px;top:496px;width:15px;height:15px"><svg width="15" height="15" viewBox="0 0 15 15"><circle cx="7.5" cy="7.5" r="6" fill="#fff" stroke="#5cb83a" stroke-width="2.2"/><path d="M4 6.3 H7.5 V3.8 L11 7.5 L7.5 11.2 V8.7 H4Z" fill="#5cb83a"/></svg></div>
<div class="mb" style="top:516px"></div><div class="pc" style="top:511px">Tool</div>
<div class="a" style="left:22px;top:530px;width:123px;height:17px;background:#fff"></div><div class="a" style="left:146px;top:530px;width:113px;height:17px;background:#fff"></div>
<div class="pn" style="top:531px">Tool Diameter</div>
<div class="pv" style="top:531px;">0.125</div>
<div class="a" style="left:129px;top:531px;width:15px;height:15px"><svg width="15" height="15" viewBox="0 0 15 15"><circle cx="7.5" cy="7.5" r="6" fill="#fff" stroke="#5cb83a" stroke-width="2.2"/><path d="M4 6.3 H7.5 V3.8 L11 7.5 L7.5 11.2 V8.7 H4Z" fill="#5cb83a"/></svg></div>
<div class="a" style="left:22px;top:548px;width:123px;height:16px;background:#fff"></div><div class="a" style="left:146px;top:548px;width:113px;height:16px;background:#fff"></div>
<div class="pn" style="top:548px">Tool Number</div>
<div class="pv" style="top:548px;font-style:italic;color:#808080">0</div>
<div class="a" style="left:129px;top:549px;width:15px;height:15px"><svg width="15" height="15" viewBox="0 0 15 15"><circle cx="7.5" cy="7.5" r="6" fill="#fff" stroke="#c8c8c8" stroke-width="2"/><path d="M11 6.3 H7.5 V3.8 L4 7.5 L7.5 11.2 V8.7 H11Z" fill="#c8c8c8"/></svg></div>
<!-- status -->
<div class="a" style="left:8px;top:742px;width:1008px;height:18px;background:#f0f0f0;border-bottom:1px solid #fff"></div>
<div class="sp" style="left:7px;width:642px"></div>
<div class="sp" style="left:652px;width:198px"></div>
<div class="sp" style="left:852px;width:148px;overflow:hidden"><div class="t" style="right:1px;top:1px;transform-origin:100% 0;transform:scaleX(0.905)">3125, 189356719472640.0000</div></div>
<div class="t" style="left:655px;top:744px;transform:scaleX(0.866)">Property changed</div>
<svg class="a" style="left:1003px;top:746px" width="13" height="13" viewBox="0 0 13 13"><path d="M1.5 12.5 L12.5 1.5 M5.5 12.5 L12.5 5.5 M9.5 12.5 L12.5 9.5" stroke="#a0a0a0" stroke-width="1.4" fill="none"/><path d="M2.5 12.8 L12.8 2.5 M6.5 12.8 L12.8 6.5 M10.5 12.8 L12.8 10.5" stroke="#fff" stroke-width="0.8" fill="none"/></svg>
</body></html>
